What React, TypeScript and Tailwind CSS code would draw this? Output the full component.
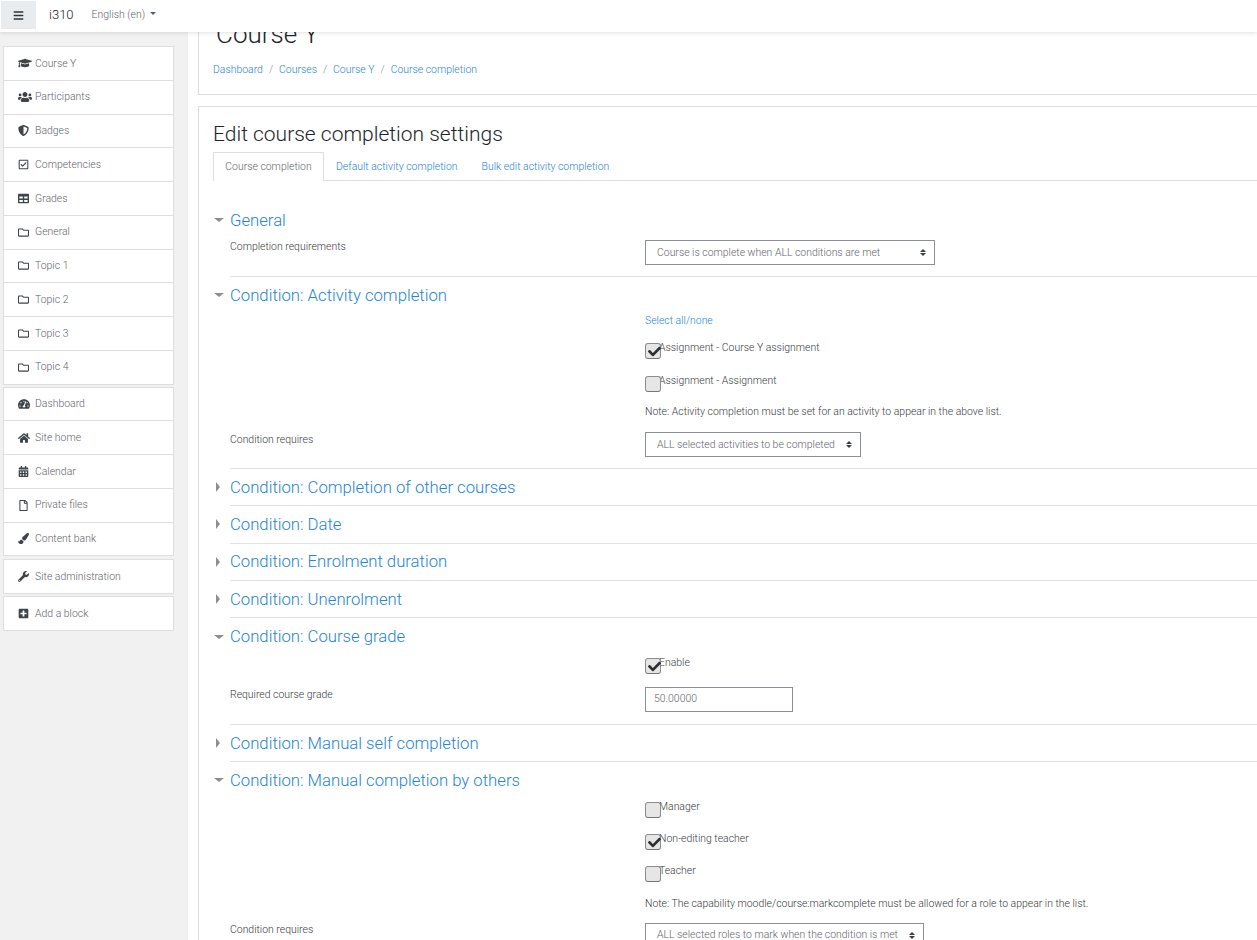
import type { ReactNode } from 'react';
import {
  FaBars,
  FaCalendarAlt,
  FaCheck,
  FaGraduationCap,
  FaHome,
  FaPaintBrush,
  FaPlusSquare,
  FaRegCheckSquare,
  FaRegFile,
  FaRegFolder,
  FaShieldAlt,
  FaTable,
  FaTachometerAlt,
  FaUsers,
  FaWrench,
} from 'react-icons/fa';

const courseNav = [
  { label: 'Course Y', icon: <FaGraduationCap className="text-[14px]" /> },
  { label: 'Participants', icon: <FaUsers className="text-[14px]" /> },
  { label: 'Badges', icon: <FaShieldAlt className="text-[11px]" /> },
  { label: 'Competencies', icon: <FaRegCheckSquare className="text-[11px]" /> },
  { label: 'Grades', icon: <FaTable className="text-[11px]" /> },
  { label: 'General', icon: <FaRegFolder className="text-[11px]" /> },
  { label: 'Topic 1', icon: <FaRegFolder className="text-[11px]" /> },
  { label: 'Topic 2', icon: <FaRegFolder className="text-[11px]" /> },
  { label: 'Topic 3', icon: <FaRegFolder className="text-[11px]" /> },
  { label: 'Topic 4', icon: <FaRegFolder className="text-[11px]" /> },
];

const siteNav = [
  { label: 'Dashboard', icon: <FaTachometerAlt className="text-[12px]" /> },
  { label: 'Site home', icon: <FaHome className="text-[12px]" /> },
  { label: 'Calendar', icon: <FaCalendarAlt className="text-[11px]" /> },
  { label: 'Private files', icon: <FaRegFile className="text-[11px]" /> },
  { label: 'Content bank', icon: <FaPaintBrush className="text-[11px]" /> },
];

function NavBlock({ items, className = '' }: { items: { label: string; icon: ReactNode }[]; className?: string }) {
  return (
    <div className={`bg-white border-t border-[#dedede] ${className}`}>
      {items.map(item => (
        <div
          key={item.label}
          className="h-[33.75px] flex items-center pl-[14px] border-x border-b border-[#dedede] text-[10.45px] font-light text-[#5f656b]"
        >
          <span className="w-[17px] flex justify-start text-[#3f4448]">{item.icon}</span>
          {item.label}
        </div>
      ))}
    </div>
  );
}

function Caret({ open }: { open: boolean }) {
  return (
    <span className="w-[17px] flex items-center pl-[1px] h-[36.4px] shrink-0">
      {open ? (
        <span className="w-0 h-0 border-x-[5px] border-x-transparent border-t-[4px] border-t-[#8b8f92]" />
      ) : (
        <span className="w-0 h-0 border-y-[5px] border-y-transparent border-l-[4px] border-l-[#8b8f92] ml-[2px]" />
      )}
    </span>
  );
}

function Section({ title, open = false, border = true, children }: { title: string; open?: boolean; border?: boolean; children?: ReactNode }) {
  return (
    <section className="flex">
      <Caret open={open} />
      <div className={`flex-1 ${border ? 'border-b border-[#dfe1e5]' : ''}`}>
        <h3 className="h-[36.4px] flex items-center text-[16.7px] font-light text-[#2585d2]">{title}</h3>
        {children}
      </div>
    </section>
  );
}

function Select({ label, className }: { label: string; className: string }) {
  return (
    <div className={`h-[25px] flex items-center justify-between pl-[11px] pr-[8px] border border-[#8a9096] text-[10.45px] font-light text-[#5f656b] ${className}`}>
      <span>{label}</span>
      <span className="flex flex-col gap-[1px]">
        <span className="w-0 h-0 border-x-[3px] border-x-transparent border-b-[3px] border-b-[#3a3f44]" />
        <span className="w-0 h-0 border-x-[3px] border-x-transparent border-t-[3px] border-t-[#3a3f44]" />
      </span>
    </div>
  );
}

function Check({ label, checked = false, className = '' }: { label: string; checked?: boolean; className?: string }) {
  return (
    <div className={`flex h-[16px] ml-[415px] ${className}`}>
      <span className="relative w-[16px] h-[16px] shrink-0 rounded-[3px] border border-[#8c8c8c] border-b-[#777777] bg-[#e6e6e6]">
        {checked && <FaCheck className="absolute left-[2px] top-[1px] text-[13px] text-[#2c2f33]" />}
      </span>
      <span className="-ml-[2px] -mt-[2px] h-[14px] leading-[14px] text-[10.45px] font-light text-[#373a3c]">{label}</span>
    </div>
  );
}

function FieldLabel({ children, className = '' }: { children: ReactNode; className?: string }) {
  return <div className={`w-[415px] shrink-0 leading-[14px] text-[10.45px] font-light text-[#373a3c] ${className}`}>{children}</div>;
}

function Note({ children, className = '' }: { children: ReactNode; className?: string }) {
  return <p className={`ml-[415px] h-[14px] leading-[14px] text-[10.45px] font-light text-[#373a3c] whitespace-nowrap ${className}`}>{children}</p>;
}

export default function App() {
  return (
    <div className="h-[940px] overflow-hidden flex flex-col bg-white" style={{ fontFamily: "Roboto, 'Liberation Sans', sans-serif" }}>
      {/* top bar */}
      <header className="relative z-10 h-[32px] shrink-0 flex items-start bg-white shadow-[0_1px_4px_rgba(0,0,0,0.12)]">
        <button className="w-[35px] h-[28px] mt-[1px] ml-[1px] flex items-center justify-center bg-[#e9ecef] text-[11px] text-[#2f3336]">
          <FaBars />
        </button>
        <span className="ml-[13px] mt-[7px] text-[13px] leading-[16px] font-light text-[#212529]">i310</span>
        <span className="ml-[18px] mt-[8px] text-[10.45px] leading-[14px] font-light text-[#5f656b]">English ‎(en)‎</span>
        <span className="ml-[5px] mt-[12px] w-0 h-0 border-x-[3px] border-x-transparent border-t-[3px] border-t-[#5b6066]" />
      </header>

      <div className="flex flex-1 min-h-0">
        {/* left nav */}
        <aside className="w-[188px] shrink-0 bg-[#f1f1f1] pt-[14px] pl-[3px] pr-[14px] flex flex-col">
          <NavBlock items={courseNav} />
          <NavBlock items={siteNav} className="mt-[2px]" />
          <NavBlock items={[{ label: 'Site administration', icon: <FaWrench className="text-[11px]" /> }]} className="mt-[3px]" />
          <NavBlock items={[{ label: 'Add a block', icon: <FaPlusSquare className="text-[11px]" /> }]} className="mt-[2px]" />
        </aside>

        {/* main */}
        <main className="flex-1 min-w-0 pl-[10px] overflow-hidden">
          <div className="h-[63px] overflow-hidden flex flex-col justify-end border-l border-b border-[#dedede] pl-[14px] pb-[17px]">
            <h1 className="ml-[3px] text-[26px] leading-[30px] font-light text-[#212529] mb-[14px]">Course Y</h1>
            <nav className="h-[14px] leading-[14px] flex text-[10.45px] font-light text-[#2585d2]">
              <span>Dashboard</span>
              <span className="mx-[6px] text-[#8a8f94]">/</span>
              <span>Courses</span>
              <span className="mx-[6px] text-[#8a8f94]">/</span>
              <span>Course Y</span>
              <span className="mx-[6px] text-[#8a8f94]">/</span>
              <span>Course completion</span>
            </nav>
          </div>

          <div className="mt-[11px] border-l border-t border-[#dedede] pl-[14px] pt-[10px] h-[900px]">
            <h2 className="h-[35px] flex items-center text-[21px] font-light text-[#212529]">Edit course completion settings</h2>
            <div className="h-[29px] flex border-b border-[#dedede] text-[10.45px] font-light">
              <span className="h-[29px] w-[111px] justify-center flex items-center bg-white border-x border-t border-[#dedede] text-[#5f656b]">Course completion</span>
              <span className="h-[29px] px-[12px] flex items-center text-[#2585d2]">Default activity completion</span>
              <span className="h-[29px] px-[12px] flex items-center text-[#2585d2]">Bulk edit activity completion</span>
            </div>

            <div className="mt-[21px]">
              <Section title="General" open>
                <div className="flex mt-[1.6px] pb-[11px]">
                  <FieldLabel>Completion requirements</FieldLabel>
                  <Select label="Course is complete when ALL conditions are met" className="w-[290px] h-[24px]" />
                </div>
              </Section>

              <Section title="Condition: Activity completion" open>
                <p className="ml-[415px] mt-[1px] h-[14px] leading-[14px] text-[10.45px] font-light text-[#2585d2]">Select all/none</p>
                <Check label="Assignment - Course Y assignment" checked className="mt-[15px]" />
                <Check label="Assignment - Assignment" className="mt-[17px]" />
                <Note className="mt-[13px]">Note: Activity completion must be set for an activity to appear in the above list.</Note>
                <div className="flex mt-[13px] pb-[10.5px]">
                  <FieldLabel className="mt-[1px]">Condition requires</FieldLabel>
                  <Select label="ALL selected activities to be completed" className="w-[216px]" />
                </div>
              </Section>

              <Section title="Condition: Completion of other courses" />
              <Section title="Condition: Date" />
              <Section title="Condition: Enrolment duration" />
              <Section title="Condition: Unenrolment" />

              <Section title="Condition: Course grade" open>
                <Check label="Enable" checked className="mt-[3px]" />
                <div className="flex mt-[13px] pb-[12px]">
                  <FieldLabel className="mt-[1px]">Required course grade</FieldLabel>
                  <div className="w-[148px] h-[25px] flex items-center pl-[8px] border border-[#8a9096] text-[10.45px] font-light text-[#5f656b]">50.00000</div>
                </div>
              </Section>

              <Section title="Condition: Manual self completion" />

              <Section title="Condition: Manual completion by others" open border={false}>
                <Check label="Manager" className="mt-[3px]" />
                <Check label="Non-editing teacher" checked className="mt-[16px]" />
                <Check label="Teacher" className="mt-[16px]" />
                <Note className="mt-[15px]">Note: The capability moodle/course:markcomplete must be allowed for a role to appear in the list.</Note>
                <div className="flex mt-[12px]">
                  <FieldLabel>Condition requires</FieldLabel>
                  <Select label="ALL selected roles to mark when the condition is met" className="w-[279px]" />
                </div>
              </Section>
            </div>
          </div>
        </main>
      </div>
    </div>
  );
}
